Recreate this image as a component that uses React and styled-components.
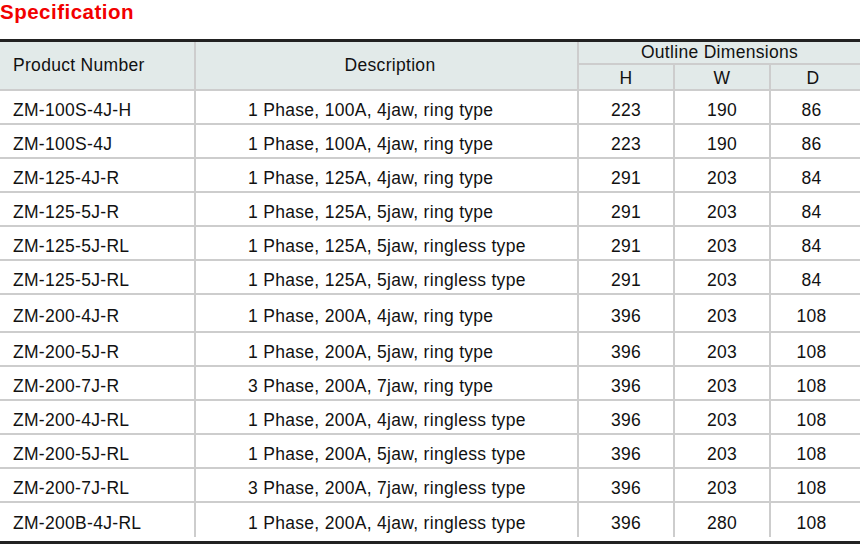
import React from "react";
import styled, { createGlobalStyle } from "styled-components";

const GlobalStyle = createGlobalStyle`
  * { box-sizing: border-box; }
  body {
    margin: 0;
    background: #ffffff;
    font-family: "Liberation Sans", Arial, sans-serif;
    color: #111111;
  }
`;

const COLS = "196px 383px 96px 96px 89px";
const LINE = "#cdcdcd";

const Page = styled.div`
  width: 860px;
  overflow: hidden;
`;

const Title = styled.h2`
  margin: 0;
  height: 39px;
  font-size: 20.5px;
  line-height: 23px;
  font-weight: bold;
  letter-spacing: 0.5px;
  color: #f20000;
`;

const Table = styled.div`
  border-top: 3px solid #222222;
  border-bottom: 3px solid #222222;
  padding-bottom: 4px;
  font-size: 17.5px;
  letter-spacing: 0.3px;
`;

const Header = styled.div`
  display: grid;
  grid-template-columns: ${COLS};
  grid-template-rows: 23px 24px;
  background: #e2eae9;
  border-bottom: 2px solid ${LINE};
`;

const HeadCell = styled.div`
  display: flex;
  align-items: center;
  justify-content: ${(p) => (p.$align === "left" ? "flex-start" : "center")};
  padding-left: ${(p) => p.$padLeft || "0"};
  padding-right: ${(p) => p.$padRight || "0"};
  padding-top: ${(p) => p.$padTop || "0"};
  grid-row: ${(p) => p.$row || "auto"};
  grid-column: ${(p) => p.$col || "auto"};
  border-right: ${(p) => (p.$last ? "none" : `2px solid ${LINE}`)};
  border-bottom: ${(p) => (p.$underline ? `2px solid ${LINE}` : "none")};
`;

const Row = styled.div`
  display: grid;
  grid-template-columns: ${COLS};
  height: ${(p) => (p.$tall ? "38px" : "34px")};
  border-bottom: ${(p) => (p.$last ? "none" : `2px solid ${LINE}`)};
`;

const Cell = styled.div`
  display: flex;
  align-items: center;
  padding-top: 7px;
  white-space: nowrap;
  justify-content: ${(p) => (p.$align === "center" ? "center" : "flex-start")};
  padding-left: ${(p) => p.$padLeft || "0"};
  padding-right: ${(p) => p.$padRight || "0"};
  border-right: ${(p) => (p.$last ? "none" : `2px solid ${LINE}`)};
`;

const rows = [
  ["ZM-100S-4J-H", "1 Phase, 100A, 4jaw, ring type", "223", "190", "86"],
  ["ZM-100S-4J", "1 Phase, 100A, 4jaw, ring type", "223", "190", "86"],
  ["ZM-125-4J-R", "1 Phase, 125A, 4jaw, ring type", "291", "203", "84"],
  ["ZM-125-5J-R", "1 Phase, 125A, 5jaw, ring type", "291", "203", "84"],
  ["ZM-125-5J-RL", "1 Phase, 125A, 5jaw, ringless type", "291", "203", "84"],
  ["ZM-125-5J-RL", "1 Phase, 125A, 5jaw, ringless type", "291", "203", "84"],
  ["ZM-200-4J-R", "1 Phase, 200A, 4jaw, ring type", "396", "203", "108"],
  ["ZM-200-5J-R", "1 Phase, 200A, 5jaw, ring type", "396", "203", "108"],
  ["ZM-200-7J-R", "3 Phase, 200A, 7jaw, ring type", "396", "203", "108"],
  ["ZM-200-4J-RL", "1 Phase, 200A, 4jaw, ringless type", "396", "203", "108"],
  ["ZM-200-5J-RL", "1 Phase, 200A, 5jaw, ringless type", "396", "203", "108"],
  ["ZM-200-7J-RL", "3 Phase, 200A, 7jaw, ringless type", "396", "203", "108"],
  ["ZM-200B-4J-RL", "1 Phase, 200A, 4jaw, ringless type", "396", "280", "108"],
];

export default function App() {
  return (
    <Page>
      <GlobalStyle />
      <Title>Specification</Title>
      <Table>
        <Header>
          <HeadCell $row="1 / 3" $col="1" $align="left" $padLeft="13px">Product Number</HeadCell>
          <HeadCell $row="1 / 3" $col="2" $padLeft="7px">Description</HeadCell>
          <HeadCell $row="1" $col="3 / 6" $last $underline>Outline Dimensions</HeadCell>
          <HeadCell $row="2" $col="3" $padTop="3px">H</HeadCell>
          <HeadCell $row="2" $col="4" $padTop="3px">W</HeadCell>
          <HeadCell $row="2" $col="5" $padTop="3px" $padRight="5px" $last>D</HeadCell>
        </Header>
        {rows.map((r, i) => (
          <Row key={i} $tall={i === 6} $last={i === rows.length - 1}>
            <Cell $padLeft="13px">{r[0]}</Cell>
            <Cell $padLeft="52px">{r[1]}</Cell>
            <Cell $align="center">{r[2]}</Cell>
            <Cell $align="center">{r[3]}</Cell>
            <Cell $align="center" $padRight="8px" $last>{r[4]}</Cell>
          </Row>
        ))}
      </Table>
    </Page>
  );
}
